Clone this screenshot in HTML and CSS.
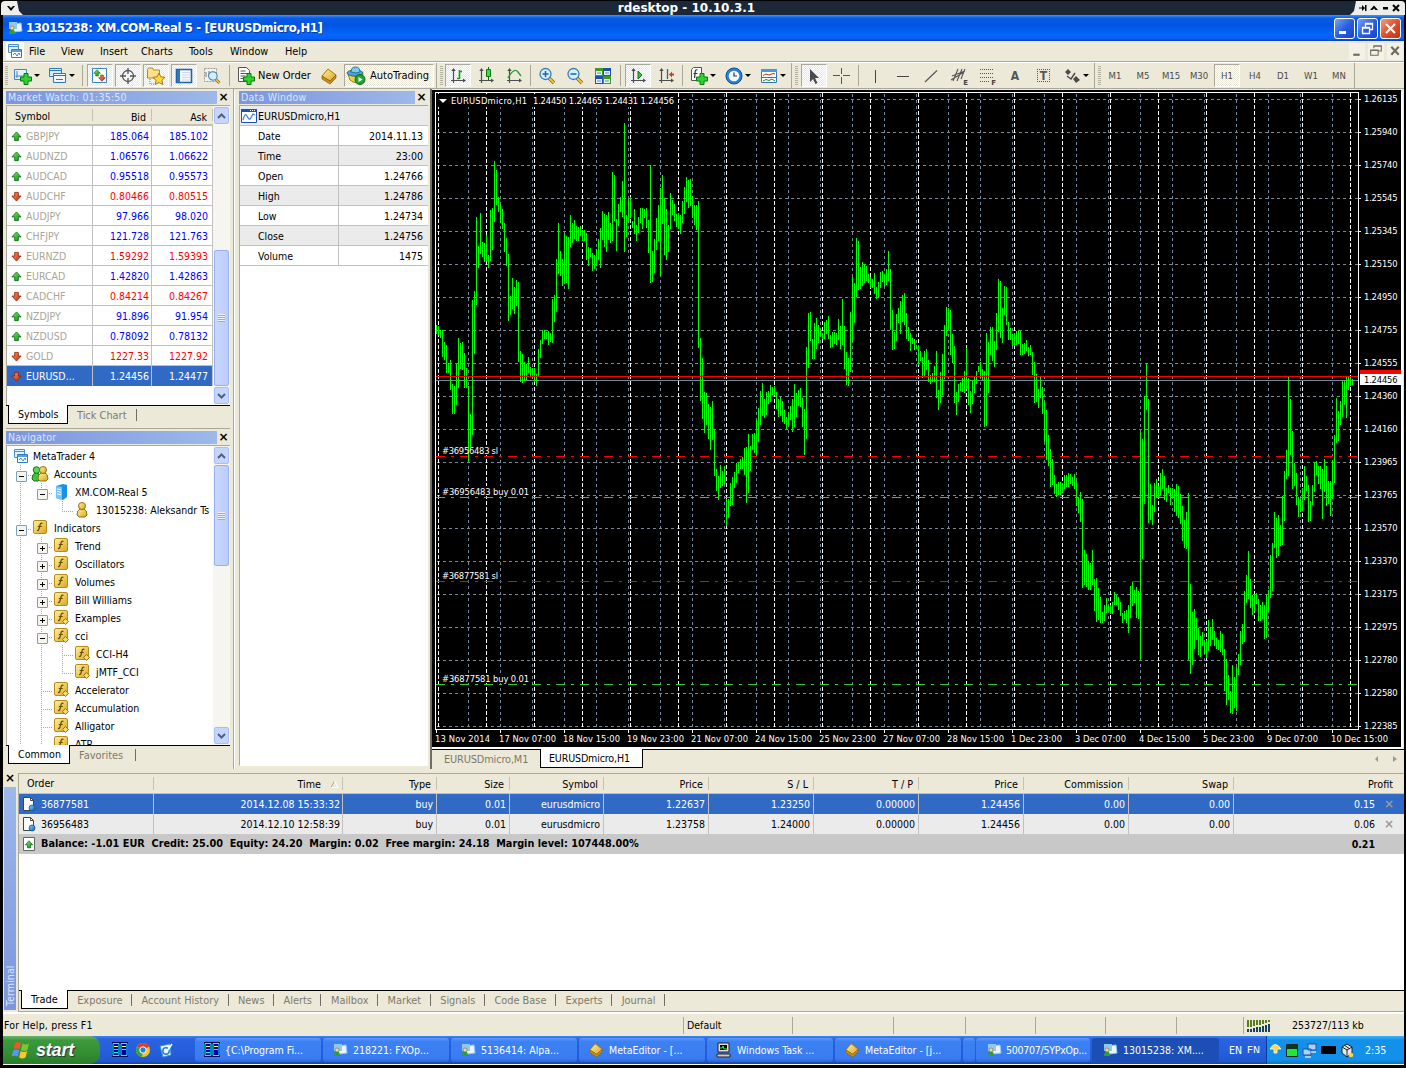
FILE: index.html
```html
<!DOCTYPE html>
<html lang="en">
<head>
<meta charset="utf-8">
<title>rdesktop - 10.10.3.1</title>
<link rel="stylesheet" href="styles.css">
</head>
<body>
<svg class="defs" aria-hidden="true">
  <defs>
    <linearGradient id="gGold" x1="0" y1="0" x2="1" y2="1"><stop offset="0" stop-color="#fff3a0"/><stop offset="1" stop-color="#d9a520"/></linearGradient>
    <linearGradient id="gGreen" x1="0" y1="0" x2="1" y2="1"><stop offset="0" stop-color="#7dee6a"/><stop offset="1" stop-color="#0c8a10"/></linearGradient>
    <linearGradient id="gRed" x1="0" y1="0" x2="1" y2="1"><stop offset="0" stop-color="#ff9a70"/><stop offset="1" stop-color="#b82a08"/></linearGradient>
    <linearGradient id="gBlue" x1="0" y1="0" x2="1" y2="1"><stop offset="0" stop-color="#7fd0ff"/><stop offset="1" stop-color="#0a62c0"/></linearGradient>
    <symbol id="plus" viewBox="0 0 12 12"><path d="M4 .5h4V4h3.500v4H8v3.500H4V8H.5V4H4z" fill="#2fd32f" stroke="#077a0c"/></symbol>
    <symbol id="up" viewBox="0 0 12 12"><path d="M6 1L11 6.500H8V10.500H4V6.500H1z" fill="url(#gGreen)" stroke="#0b6a14" stroke-width=".9"/></symbol>
    <symbol id="down" viewBox="0 0 12 12"><path d="M6 11L11 5.500H8V1.500H4V5.500H1z" fill="url(#gRed)" stroke="#8f2106" stroke-width=".9"/></symbol>
    <symbol id="func" viewBox="0 0 18 18"><rect x="2.500" y="1.500" width="13" height="13" rx="1.500" fill="url(#gGold)" stroke="#b98a1c"/><path d="M11.500 4.500q-2-1-2.500 1.500L8 10q-.4 1.800-2 1.500M6.800 7.500h4" fill="none" stroke="#6b4a00" stroke-width="1.200"/></symbol>
    <symbol id="funcd" viewBox="0 0 18 18"><use href="#func"/><path d="M13.500 9.500l3 3-3 3-3-3z" fill="#f5d76a" stroke="#9c7414"/></symbol>
    <symbol id="windows" viewBox="0 0 18 18"><path d="M2.500 2.500h10v8h-10z" fill="#dff0ff" stroke="#4a90d0" /><path d="M2.500 4.500h10" stroke="#4a90d0"/><path d="M5.500 7.500h10v8h-10z" fill="#fff" stroke="#2c7cc8"/><path d="M5.500 9h10" stroke="#2c7cc8" stroke-width="1.500"/><path d="M7 13l2-2 2 3 2-3 1 2" fill="none" stroke="#2c7cc8" stroke-width=".9"/></symbol>
    <symbol id="user" viewBox="0 0 18 18"><path d="M4 14q0-5 3-6h4q3 1 3 6l-2 2H6z" fill="url(#gGold)" stroke="#94700f"/><circle cx="9" cy="5" r="3.500" fill="url(#gGold)" stroke="#94700f"/></symbol>
    <symbol id="users" viewBox="0 0 18 18"><path d="M1 14q0-5 3-6h3l3 6-3 2H3z" fill="#3ec43e" stroke="#117a17"/><circle cx="5.500" cy="5" r="3.300" fill="#58d850" stroke="#117a17"/><path d="M7 14q0-5 3-6h4q3 1 3 6l-2 2H9z" fill="url(#gGold)" stroke="#94700f"/><circle cx="12" cy="5" r="3.500" fill="url(#gGold)" stroke="#94700f"/></symbol>
    <symbol id="server" viewBox="0 0 18 18"><path d="M4 3l7-2 4 1v12l-4 3-7-2z" fill="#1b8fe0"/><path d="M4 3l6 1v13l-6-2z" fill="#6cc6ff"/><path d="M5 6l4 .7M5 8.500l4 .7M5 11l4 .7" stroke="#fff"/></symbol>
    <symbol id="app" viewBox="0 0 16 16"><path d="M6 4l8-1 1 8-8 1z" fill="#eaf5ff" stroke="#9cc8ee"/><path d="M2 2h8v7H2z" fill="#8fc8f4"/><path d="M2 14q0-4 3-5 3 1 3 5z" fill="#2f9e3a"/><circle cx="5" cy="8" r="2" fill="#f0d8a0" stroke="#7a5a10" stroke-width=".5"/></symbol>
    <symbol id="book" viewBox="0 0 18 18"><path d="M2 9l6-7 8 6-6 6z" fill="url(#gGold)" stroke="#a87412"/><path d="M2 9l8 5 6-6v3l-6 6-8-5z" fill="#c98d1c" stroke="#8a5c08" stroke-width=".7"/></symbol>
    <symbol id="axes" viewBox="0 0 18 18"><path d="M4.500 3v13M2 13.500h13" stroke="#4d4d4d" stroke-width="1.200"/><path d="M4.500 1l2.200 3H2.300zM17 13.500l-3-2v4z" fill="#4d4d4d"/></symbol>
    <symbol id="lens" viewBox="0 0 18 18"><path d="M11 11l5 5" stroke="#8a6410" stroke-width="3.600"/><path d="M11 11l5 5" stroke="#f0c83c" stroke-width="2"/><circle cx="7.500" cy="7" r="5.500" fill="#d4edff" stroke="#3a7eb4" stroke-width="1.300"/></symbol>
    <symbol id="panels" viewBox="0 0 16 16"><path d="M0 0h16v15H0z" fill="#000c50"/><path d="M1 1.500h6v12H1zM9 1.500h6v12H9z" fill="#0000a8" stroke="#0ff"/><path d="M2 4.500h4M10 4.500h4" stroke="#ff3"/><path d="M2 7.500h4M10 7.500h4M2 10.500h4" stroke="#0ff"/></symbol>
    <symbol id="page" viewBox="0 0 14 16"><path d="M1.500 1.500h7l3 3v10h-10z" fill="#fff" stroke="#444"/><path d="M8.500 1.500v3h3" fill="none" stroke="#444"/></symbol>
  </defs>
</svg>

<div class="frame">
  <header class="vm-bar">
    <span class="vm-corner vm-left"><svg width="10" height="7" viewBox="0 0 10 7"><path d="M1 1l4 5 4-5-2 0-2 2-2-2z"/></svg></span>
    <span class="vm-title">rdesktop - 10.10.3.1</span>
    <span class="vm-corner vm-right">
      <svg width="44" height="8" viewBox="0 0 44 8" fill="#000"><path d="M0 3.500h5v1H0zM3 1l3 3-3 3zM6 1h1.500v6H6zM11 6l4-4.500L19 6h-2.500L15 4.500 13.500 6zM24 3h5v2.500h-5z"/><path d="M34 1l6 6M40 1l-6 6" stroke="#000" stroke-width="2"/></svg>
    </span>
  </header>

  <div class="title-bar">
    <svg class="i16"><use href="#app"/></svg>
    <h1>13015238: XM.COM-Real 5 - [EURUSDmicro,H1]</h1>
    <div class="win-btns">
      <span class="win-btn"><svg viewBox="0 0 19 19"><path d="M4 12h7v3H4z" fill="#fff"/></svg></span>
      <span class="win-btn"><svg viewBox="0 0 19 19"><path d="M7.500 8V4.500h7v6H12M7 5h8M4.500 8.500h7v6h-7zM4 9h8" fill="none" stroke="#fff" stroke-width="1.300"/></svg></span>
      <span class="win-btn close"><svg viewBox="0 0 19 19"><path d="M5 5l9 9M14 5l-9 9" stroke="#fff" stroke-width="2.200"/></svg></span>
    </div>
  </div>

  <nav class="menu-bar">
    <svg class="menu-icon"><use href="#windows"/></svg>
    <span class="m-file">File</span><span class="m-view">View</span><span class="m-insert">Insert</span><span class="m-charts">Charts</span><span class="m-tools">Tools</span><span class="m-window">Window</span><span class="m-help">Help</span>
    <div class="mdi-btns">
      <span><svg viewBox="0 0 15 15"><path d="M4 10h6v2H4z" fill="#6d6a60"/></svg></span>
      <span><svg viewBox="0 0 15 15"><path d="M5.500 5V2.500h7v5H10M5 3h8M2.500 6.500h7v5h-7zM2 7h8" fill="none" stroke="#6d6a60"/></svg></span>
      <span><svg viewBox="0 0 15 15"><path d="M4 3.500l7 7.500M11 3.500L4 11" stroke="#6d6a60" stroke-width="2"/></svg></span>
    </div>
  </nav>

  <div class="toolbar">
    <i class="grip first"></i>
    <span class="tb drop"><svg viewBox="0 0 20 20"><path d="M1.500 3.500h12v10h-12z" fill="#e6f3ff" stroke="#3c86c4"/><path d="M4 5v7M2.500 10h9" stroke="#3c86c4"/><svg x="7" y="7" width="12" height="12"><use href="#plus"/></svg></svg><b></b></span>
    <span class="tb drop"><svg viewBox="0 0 20 20"><path d="M1.500 2.500h12v8h-12z" fill="#d8ecff" stroke="#2f78ba"/><path d="M1.500 4.500h12" stroke="#2f78ba"/><path d="M5.500 7.500h12v9h-12z" fill="#eef7ff" stroke="#2f78ba"/><path d="M5.500 9.500h12M8 13.500h7" stroke="#2f78ba"/></svg><b></b></span>
    <i class="sep s7"></i>
    <span class="tb on"><svg viewBox="0 0 20 20"><path d="M2.500 2.500h14v14h-14z" fill="#fff" stroke="#3c86c4"/><svg x="3" y="3" width="8" height="8"><use href="#up"/></svg><svg x="8" y="8" width="8" height="8"><use href="#down"/></svg></svg></span>
    <span class="tb on"><svg viewBox="0 0 20 20"><circle cx="10" cy="10" r="5.500" fill="none" stroke="#555" stroke-width="1.300"/><path d="M10 2v6M10 12v6M2 10h6M12 10h6" stroke="#555" stroke-width="1.300"/></svg></span>
    <span class="tb on"><svg viewBox="0 0 20 20"><path d="M1.500 3.500l1-1.500h4l1 2h6v8h-12z" fill="#fbe28a" stroke="#b88a1c"/><path d="M4 13v5h4" stroke="#777" stroke-dasharray="1 1" fill="none"/><path d="M13 7l1.800 3.800 4.200.5-3 3 .8 4.200-3.800-2-3.800 2 .8-4.200-3-3 4.200-.5z" fill="#ffd83a" stroke="#a87810"/></svg></span>
    <span class="tb on"><svg viewBox="0 0 20 20"><path d="M2.500 3.500h15v13h-15z" fill="#f5faff" stroke="#1c62aa" stroke-width="1.600"/><path d="M3 4h3v12H3z" fill="#2a78c8"/><path d="M8 6.500h8M8 9h8M8 11.500h8M8 14h8" stroke="#c4d8ea"/></svg></span>
    <span class="tb"><svg viewBox="0 0 20 20"><path d="M2.500 2.500h12v13h-12z" fill="#f2f2f0" stroke="#999" stroke-dasharray="2 1"/><path d="M4 11V6M7 9V5M10 12V7" stroke="#777"/><svg x="5" y="4" width="14" height="15"><use href="#lens"/></svg></svg></span>
    <i class="sep s6"></i>
    <span class="tb wide new-order"><svg viewBox="0 0 20 20"><path d="M2.500 1.500h8l3 3v11h-11z" fill="#fff" stroke="#555"/><path d="M4.500 5h5M4.500 7.500h7M4.500 10h5M4.500 12.500h3" stroke="#555"/><svg x="7" y="7" width="12" height="12"><use href="#plus"/></svg></svg>New Order</span>
    <span class="tb"><svg viewBox="-1 -1 20 20"><use href="#book" width="18" height="18"/></svg></span>
    <span class="tb wide on auto"><svg viewBox="0 0 20 20"><path d="M2 8q8 5 15 0l-1 7q-6 4-12-1z" fill="#f3cf48" stroke="#a87c18"/><ellipse cx="9" cy="7" rx="8" ry="3" fill="#4aa4dc" stroke="#24729e"/><path d="M5 6q0-5 4.500-5T14 6q-4 2-9 0z" fill="#7fc8ee" stroke="#24729e"/><circle cx="14" cy="13.500" r="5" fill="#22a52c" stroke="#0b6e12"/><path d="M12.500 11l4 2.500-4 2.500z" fill="#fff"/></svg>AutoTrading</span>

    <i class="edge e9"></i>
    <span class="tb on"><svg viewBox="0 0 20 20"><use href="#axes" x="1" y="1" width="18" height="18"/><path d="M11.500 4v9M9 12.500h2.500M11.500 5.500H14" stroke="#119a1c" stroke-width="1.600"/></svg></span>
    <span class="tb"><svg viewBox="0 0 20 20"><use href="#axes" x="1" y="1" width="18" height="18"/><path d="M12.500 1v13" stroke="#0b6a14"/><path d="M10.500 3.500h4v7h-4z" fill="#3fd84a" stroke="#0b7a14"/></svg></span>
    <span class="tb"><svg viewBox="0 0 20 20"><use href="#axes" x="1" y="1" width="18" height="18"/><path d="M4 12q6-11 10-6l3 4" fill="none" stroke="#2a9a36" stroke-width="1.300"/></svg></span>
    <i class="sep s5"></i>
    <span class="tb"><svg viewBox="0 0 20 20"><use href="#lens" x="1" y="1" width="18" height="18"/><path d="M5.500 8h6M8.500 5v6" stroke="#1b66a8" stroke-width="1.500"/></svg></span>
    <span class="tb"><svg viewBox="0 0 20 20"><use href="#lens" x="1" y="1" width="18" height="18"/><path d="M5.500 8h6" stroke="#1b66a8" stroke-width="1.500"/></svg></span>
    <span class="tb"><svg viewBox="0 0 20 20"><path d="M2 2h8v8H2zM10 10h8v8h-8z" fill="#3c9a20"/><path d="M10 2h8v8h-8zM2 10h8v8H2z" fill="#1b50b8"/><path d="M3 5h6v4H3zM11 5h6v4h-6zM3 13h6v4H3zM11 13h6v4h-6z" fill="#eaf4ff"/><path d="M4 7h4M12 7h4M4 15h4M12 15h4" stroke="#5a8a9a"/></svg></span>
    <i class="sep s7"></i>
    <span class="tb on"><svg viewBox="0 0 20 20"><use href="#axes" x="1" y="1" width="18" height="18"/><path d="M10 5l4 4-4 4z" fill="#33c23c" stroke="#0b7a14"/></svg></span>
    <span class="tb"><svg viewBox="0 0 20 20"><use href="#axes" x="1" y="1" width="18" height="18"/><path d="M11.500 3v10" stroke="#1b66a8" stroke-width="1.300"/><path d="M13 8.500l3-3v2h2v2h-2v2z" fill="#c0431c"/></svg></span>
    <i class="sep s5"></i>
    <span class="tb drop"><svg viewBox="0 0 20 20"><path d="M2.500 3.500l2-2h8v13h-10z" fill="#fff" stroke="#555"/><path d="M8.500 4q-2-.6-2.300 1.500L5.600 12M4.500 7.500h4" fill="none" stroke="#333" stroke-width="1.200"/><svg x="7" y="7" width="12" height="12"><use href="#plus"/></svg></svg><b></b></span>
    <span class="tb drop"><svg viewBox="0 0 20 20"><circle cx="10" cy="10" r="8" fill="#2a80d4" stroke="#0f4c90"/><circle cx="10" cy="10" r="5.300" fill="#f2f8ff"/><path d="M10 6.500V10h3" fill="none" stroke="#333" stroke-width="1.200"/></svg><b></b></span>
    <span class="tb drop"><svg viewBox="0 0 20 20"><path d="M2.500 3.500h15v13h-15z" fill="#fff" stroke="#2f78ba"/><path d="M2 3h16v3H2z" fill="#4a98dc"/><path d="M4 9.500l3-1.500 3 1 4-1.500 2 .5" fill="none" stroke="#b4381c"/><path d="M3 11.500h14" stroke="#2f78ba"/><path d="M4 15l3-1.500 3 1 3-1.500 3 2" fill="none" stroke="#1d8a28"/></svg><b></b></span>

    <i class="edge e10"></i>
    <span class="tb on"><svg viewBox="0 0 20 20"><path d="M6 3v13l3-3 2.500 5 2-1-2.500-5h4z" fill="#4a4a4a"/></svg></span>
    <span class="tb"><svg viewBox="0 0 20 20"><path d="M9.500 2v6M9.500 11v7M1 9.500h7M11 9.500h7" stroke="#555"/></svg></span>
    <i class="sep s5"></i>
    <span class="tb"><svg viewBox="0 0 20 20"><path d="M10.500 4v13" stroke="#444"/></svg></span>
    <span class="tb"><svg viewBox="0 0 20 20"><path d="M4 10.500h12" stroke="#444"/></svg></span>
    <span class="tb"><svg viewBox="0 0 20 20"><path d="M4 16L16 4.500" stroke="#555" stroke-width="1.200"/></svg></span>
    <span class="tb"><svg viewBox="0 0 20 20"><path d="M4 15L9 3M8 15l5-12M12 13l4-10M2 14L15 6M3 10l13-5" stroke="#555" stroke-width="1.100"/></svg><em>E</em></span>
    <span class="tb"><svg viewBox="0 0 20 20"><path d="M3 3.500h14M3 7.500h14M3 11.500h14M3 15.500h9" stroke="#555" stroke-dasharray="1 1"/></svg><em>F</em></span>
    <span class="tb glyph">A</span>
    <span class="tb glyph boxed"><span>T</span></span>
    <span class="tb drop tool"><svg viewBox="0 0 20 20"><path d="M3 6l3-3 3 3-3 3zM11 13l3-3 4 4-4 3z" fill="#4a4a4a"/><path d="M5 10l4 3 4-6" fill="none" stroke="#4a4a4a" stroke-width="1.500"/></svg><b></b></span>

    <i class="edge e7"></i>
    <span class="tb tf">M1</span><span class="tb tf">M5</span><span class="tb tf">M15</span><span class="tb tf">M30</span><span class="tb tf on">H1</span><span class="tb tf">H4</span><span class="tb tf">D1</span><span class="tb tf">W1</span><span class="tb tf">MN</span>
    <i class="edge last"></i>
  </div>

  <main class="work">
    <div class="left-col">
      <section class="dock market">
        <h2 class="dock-title">Market Watch: 01:35:50</h2><span class="x">×</span>
        <div class="dock-body">
          <div class="mw">
            <div class="mw-row head"><span>Symbol</span><span>Bid</span><span>Ask</span></div>
            <div class="mw-row up"><span><svg><use href="#up"/></svg>GBPJPY</span><span>185.064</span><span>185.102</span></div>
            <div class="mw-row up"><span><svg><use href="#up"/></svg>AUDNZD</span><span>1.06576</span><span>1.06622</span></div>
            <div class="mw-row up"><span><svg><use href="#up"/></svg>AUDCAD</span><span>0.95518</span><span>0.95573</span></div>
            <div class="mw-row down"><span><svg><use href="#down"/></svg>AUDCHF</span><span>0.80466</span><span>0.80515</span></div>
            <div class="mw-row up"><span><svg><use href="#up"/></svg>AUDJPY</span><span>97.966</span><span>98.020</span></div>
            <div class="mw-row up"><span><svg><use href="#up"/></svg>CHFJPY</span><span>121.728</span><span>121.763</span></div>
            <div class="mw-row down"><span><svg><use href="#down"/></svg>EURNZD</span><span>1.59292</span><span>1.59393</span></div>
            <div class="mw-row up"><span><svg><use href="#up"/></svg>EURCAD</span><span>1.42820</span><span>1.42863</span></div>
            <div class="mw-row down"><span><svg><use href="#down"/></svg>CADCHF</span><span>0.84214</span><span>0.84267</span></div>
            <div class="mw-row up"><span><svg><use href="#up"/></svg>NZDJPY</span><span>91.896</span><span>91.954</span></div>
            <div class="mw-row up"><span><svg><use href="#up"/></svg>NZDUSD</span><span>0.78092</span><span>0.78132</span></div>
            <div class="mw-row down"><span><svg><use href="#down"/></svg>GOLD</span><span>1227.33</span><span>1227.92</span></div>
            <div class="mw-row down sel"><span><svg><use href="#down"/></svg>EURUSD...</span><span>1.24456</span><span>1.24477</span></div>
          </div>
          <div class="scroll">
            <span class="sb"><svg viewBox="0 0 9 6"><path d="M1 5l3.500-3.500L8 5"/></svg></span>
            <span class="track"></span><span class="thumb t-market"></span>
            <span class="sb"><svg viewBox="0 0 9 6"><path d="M1 1l3.500 3.500L8 1"/></svg></span>
          </div>
        </div>
        <div class="tabs"><span class="tab active">Symbols</span><span class="tab">Tick Chart</span></div>
      </section>

      <section class="dock nav">
        <h2 class="dock-title">Navigator</h2><span class="x">×</span>
        <div class="dock-body">
          <div class="tree">
            <div class="node root"><svg><use href="#windows"/></svg>MetaTrader 4</div>
            <div class="node"><i class="t box minus"></i><svg><use href="#users"/></svg>Accounts</div>
            <div class="node"><i class="g"></i><i class="l box minus"></i><svg><use href="#server"/></svg>XM.COM-Real 5</div>
            <div class="node"><i class="g"></i><i></i><i class="l"></i><svg><use href="#user"/></svg>13015238: Aleksandr Ts</div>
            <div class="node"><i class="t box minus"></i><svg><use href="#func"/></svg>Indicators</div>
            <div class="node"><i class="g"></i><i class="t box"></i><svg><use href="#func"/></svg>Trend</div>
            <div class="node"><i class="g"></i><i class="t box"></i><svg><use href="#func"/></svg>Oscillators</div>
            <div class="node"><i class="g"></i><i class="t box"></i><svg><use href="#func"/></svg>Volumes</div>
            <div class="node"><i class="g"></i><i class="t box"></i><svg><use href="#func"/></svg>Bill Williams</div>
            <div class="node"><i class="g"></i><i class="t box"></i><svg><use href="#funcd"/></svg>Examples</div>
            <div class="node"><i class="g"></i><i class="t box minus"></i><svg><use href="#funcd"/></svg>cci</div>
            <div class="node"><i class="g"></i><i class="g"></i><i class="t"></i><svg><use href="#funcd"/></svg>CCI-H4</div>
            <div class="node"><i class="g"></i><i class="g"></i><i class="l"></i><svg><use href="#funcd"/></svg>jMTF_CCI</div>
            <div class="node"><i class="g"></i><i class="t"></i><svg><use href="#funcd"/></svg>Accelerator</div>
            <div class="node"><i class="g"></i><i class="t"></i><svg><use href="#funcd"/></svg>Accumulation</div>
            <div class="node"><i class="g"></i><i class="t"></i><svg><use href="#funcd"/></svg>Alligator</div>
            <div class="node"><i class="g"></i><i class="t"></i><svg><use href="#funcd"/></svg>ATR</div>
          </div>
          <div class="scroll">
            <span class="sb"><svg viewBox="0 0 9 6"><path d="M1 5l3.500-3.500L8 5"/></svg></span>
            <span class="thumb t-nav"></span><span class="track"></span>
            <span class="sb"><svg viewBox="0 0 9 6"><path d="M1 1l3.500 3.500L8 1"/></svg></span>
          </div>
        </div>
        <div class="tabs"><span class="tab active">Common</span><span class="tab">Favorites</span></div>
      </section>
    </div>

    <section class="dock data">
      <h2 class="dock-title">Data Window</h2><span class="x">×</span>
      <div class="dw">
        <div class="dw-head"><svg width="16" height="14" viewBox="0 0 16 14"><path d="M.5.500h15v13H.5z" fill="#fff" stroke="#1b50b8"/><path d="M0 0h16v3H0z" fill="#1b50b8"/><path d="M9 1.500h1M11 1.500h1M13 1.500h1" stroke="#fff"/><path d="M2 11q2-8 4-4t3 3 3-5l2 1" fill="none" stroke="#3a82d8" stroke-width="1.200"/></svg>EURUSDmicro,H1</div>
        <div class="dw-row"><span>Date</span><span>2014.11.13</span></div>
        <div class="dw-row"><span>Time</span><span>23:00</span></div>
        <div class="dw-row"><span>Open</span><span>1.24766</span></div>
        <div class="dw-row"><span>High</span><span>1.24786</span></div>
        <div class="dw-row"><span>Low</span><span>1.24734</span></div>
        <div class="dw-row"><span>Close</span><span>1.24756</span></div>
        <div class="dw-row"><span>Volume</span><span>1475</span></div>
      </div>
    </section>

    <section class="charts">
      <svg id="chart" class="chart" width="969" height="657" viewBox="432 90 969 657"></svg>
      <div class="tabs chart-tabs"><span class="tab">EURUSDmicro,M1</span><span class="tab active">EURUSDmicro,H1</span>
        <span class="tab-arrows"><svg width="24" height="8" viewBox="0 0 24 8" fill="#9a9a94"><path d="M4 1v6L1 4zM19 1v6l4-3z"/></svg></span></div>
    </section>
  </main>

  <section class="terminal">
    <div class="side"><span class="x">×</span><span class="side-title">Terminal</span></div>
    <div class="term-main">
      <div class="tr th"><span>Order</span><span>Time<svg width="9" height="8" viewBox="0 0 9 8"><path d="M1 7.500L4.500 1" stroke="#aca899"/><path d="M4.500 1L8 7.500H1" fill="none" stroke="#fff"/></svg></span><span>Type</span><span>Size</span><span>Symbol</span><span>Price</span><span>S / L</span><span>T / P</span><span>Price</span><span>Commission</span><span>Swap</span><span>Profit</span></div>
      <div class="tr sel"><span><svg viewBox="0 0 14 16"><use href="#page"/><circle cx="10" cy="12" r="3" fill="url(#gBlue)" stroke="#0a4c90" stroke-width=".7"/></svg>36877581</span><span>2014.12.08 15:33:32</span><span>buy</span><span>0.01</span><span>eurusdmicro</span><span>1.22637</span><span>1.23250</span><span>0.00000</span><span>1.24456</span><span>0.00</span><span>0.00</span><span>0.15<u>×</u></span></div>
      <div class="tr alt"><span><svg viewBox="0 0 14 16"><use href="#page"/><circle cx="10" cy="12" r="3" fill="url(#gBlue)" stroke="#0a4c90" stroke-width=".7"/></svg>36956483</span><span>2014.12.10 12:58:39</span><span>buy</span><span>0.01</span><span>eurusdmicro</span><span>1.23758</span><span>1.24000</span><span>0.00000</span><span>1.24456</span><span>0.00</span><span>0.00</span><span>0.06<u>×</u></span></div>
      <div class="balance"><svg viewBox="0 0 14 16"><path d="M1.500 1.500h11v13h-11z" fill="#fff" stroke="#666"/><svg x="2.500" y="4" width="9" height="9"><use href="#up"/></svg></svg><span>Balance: -1.01 EUR&nbsp; Credit: 25.00&nbsp; Equity: 24.20&nbsp; Margin: 0.02&nbsp; Free margin: 24.18&nbsp; Margin level: 107448.00%</span><strong>0.21</strong></div>
      <div class="blank"></div>
      <div class="tabs"><span class="tab active">Trade</span><span class="tab">Exposure</span><span class="tab">Account History</span><span class="tab">News</span><span class="tab">Alerts</span><span class="tab">Mailbox</span><span class="tab">Market</span><span class="tab">Signals</span><span class="tab">Code Base</span><span class="tab">Experts</span><span class="tab">Journal</span></div>
    </div>
  </section>

  <footer class="status"><span>For Help, press F1</span><span>Default</span><span></span><span></span><span></span><span></span><span></span><span></span><span class="conn"><svg width="24" height="12" viewBox="0 0 24 12"><path d="M1 0v7M4 0v7M7 0v6M10 0v5M13 0v5M16 0v4M19 0v3M22 0v2" stroke="#5b7a1c" stroke-width="2"/><path d="M1 9v3M4 9v3M7 8v4M10 7v5M13 7v5M16 6v6M19 5v7M22 4v8" stroke="#17435e" stroke-width="2"/></svg>253727/113 kb</span></footer>

  <div class="taskbar">
    <span class="start"><svg width="20" height="18" viewBox="0 0 20 18"><path d="M3 2q3-2 6 0l-1.500 6q-3-1.500-6 0z" fill="#f0562a"/><path d="M10.500 2.500q3 2 6.500 0L15.500 9q-3 2-6.500 0z" fill="#7cc534"/><path d="M1.200 9.500q3-2 6 0L5.700 15.500q-3-1.500-6 0z" fill="#5a94f4"/><path d="M8.700 10q3 2 6.500 0l-1.700 6.500q-3 2-6.300 0z" fill="#fdc822"/></svg>start</span>
    <span class="quick">
      <svg width="16" height="16"><use href="#panels"/></svg>
      <svg width="16" height="16" viewBox="0 0 16 16"><circle cx="8" cy="8" r="7" fill="#f4c61c"/><path d="M8 8L1.900 4.500A7 7 0 0 1 14.100 4.500z" fill="#df3b2c"/><path d="M8 8L7 15A7 7 0 0 1 1.900 4.500z" fill="#33a34c"/><circle cx="8" cy="8" r="3.200" fill="#2c7be0" stroke="#fff"/></svg>
      <svg width="16" height="16" viewBox="0 0 16 16"><path d="M2 4l10-2 1 11-8 2z" fill="#e8f4ff" stroke="#3a92d8"/><circle cx="8" cy="9" r="3.200" fill="none" stroke="#2a84cc" stroke-width="1.500"/><path d="M9 9l5-7" stroke="#fff" stroke-width="1.500"/></svg>
    </span>
    <span class="task"><svg><use href="#panels"/></svg>{C:\Program Fi...</span>
    <span class="task"><svg><use href="#app"/></svg>218221: FXOp...</span>
    <span class="task"><svg><use href="#app"/></svg>5136414: Alpa...</span>
    <span class="task"><svg><use href="#book"/></svg>MetaEditor - [...</span>
    <span class="task"><svg viewBox="0 0 16 16"><path d="M2 1h11v9H2z" fill="#ddd" stroke="#222"/><path d="M4 3h7v5H4z" fill="#001"/><path d="M4 6h2l1-2 1 3h3" fill="none" stroke="#3f3"/><path d="M1 12h13v3H1z" fill="#ccc" stroke="#222"/></svg>Windows Task ...</span>
    <span class="task"><svg><use href="#book"/></svg>MetaEditor - [j...</span>
    <span class="task stub"></span>
    <span class="task cut"><svg><use href="#app"/></svg>500707/5YPxOp...</span>
    <span class="task current"><svg><use href="#app"/></svg>13015238: XM....</span>
    <span class="lang">EN</span><span class="lang second">EN</span>
    <span class="tray">
      <svg width="13" height="14" viewBox="0 0 13 14"><path d="M1 6q5-9 11 0H8v4H5V6z" fill="#f8d83c" stroke="#fff" stroke-width=".8"/></svg>
      <svg width="12" height="13" viewBox="0 0 12 13"><path d="M.5.500h11v12H.5z" fill="#0d3a10" stroke="#222"/><path d="M1 5h10v7H1z" fill="#1fe83a"/></svg>
      <svg width="15" height="15" viewBox="0 0 15 15"><path d="M6 1h8v6H6zM1 6h8v6H1z" fill="#a6d4ff" stroke="#234c9c"/><path d="M3 14h6M9 9h5" stroke="#ddd" stroke-width="1.500"/></svg>
      <svg width="15" height="8" viewBox="0 0 15 8"><path d="M0 0h15v8H0z"/></svg>
      <svg width="14" height="15" viewBox="0 0 14 15"><path d="M7 1l5 3v6l-5 4-5-4V4z" fill="#e8e8e8" stroke="#222"/><path d="M2 4l5 3 5-3M7 7v7M4 2l6 4" fill="none" stroke="#222"/><circle cx="11" cy="12" r="2.300" fill="#f8d83c"/></svg>
      <span class="clock">2:35</span>
    </span>
  </div>
</div>
<script src="chart.js"></script>
</body>
</html>
```
FILE: styles.css
```css
* { box-sizing: border-box; }
html, body { margin: 0; }
body {
  width: 1406px; height: 1068px; overflow: hidden; background: #000; color: #000;
  font: 10.5px/14px "DejaVu Sans Condensed", "DejaVu Sans", "Noto Sans", sans-serif;
  font-stretch: condensed;
  white-space: nowrap;
}
h1, h2 { margin: 0; font: inherit; }
i, em { font-style: normal; }
svg { flex: none; display: block; }
.defs { position: absolute; width: 0; height: 0; }

.frame { width: 1406px; height: 1068px; padding: 1px 2px 3px 3px; display: flex; flex-direction: column; overflow: hidden; }

/* remote desktop strip */
.vm-bar { height: 14px; margin: 0 -1px 0 -2px; background: #1c2838; display: flex; justify-content: space-between; align-items: center; border-radius: 4px 4px 0 0; overflow: hidden; }
.vm-corner { height: 14px; background: #ededeb; display: flex; align-items: center; }
.vm-left { width: 22px; padding-left: 5px; clip-path: polygon(0 0, 16px 0, 18px 10px, 100% 100%, 0 100%); }
.vm-right { width: 55px; padding-left: 9px; clip-path: polygon(6px 0, 100% 0, 100% 100%, 0 100%, 4px 10px); }
.vm-title { color: #fff; font: bold 12px/14px "DejaVu Sans", sans-serif; font-stretch: normal; }

.title-bar { height: 26px; display: flex; align-items: center; padding: 0 3px 0 4px; background: linear-gradient(#3d95ff 0, #0a5be4 12%, #0054e3 40%, #0466fd 75%, #0462f5 90%, #003fc0); }
.i16 { width: 16px; height: 16px; margin-right: 3px; }
.title-bar h1 { color: #fff; font: bold 13px/24px "DejaVu Sans Condensed", sans-serif; font-stretch: condensed; letter-spacing: -.37px; text-shadow: 1px 1px 0 #0a3a9c; flex: 1; }
.win-btns { display: flex; gap: 2px; }
.win-btn { width: 21px; height: 21px; border: 1px solid #fff; border-radius: 3px; background: linear-gradient(135deg, #7ba2f0, #2a5fe0 50%, #1746c8); }
.win-btn.close { background: linear-gradient(135deg, #f0a088, #e0502c 50%, #c0340f); }

.menu-bar { height: 21px; flex: none; background: #ece9d8; border-bottom: 1px solid #aca899; display: flex; align-items: center; line-height: 18px; }
.menu-icon { width: 18px; height: 18px; margin: 0 0 0 3px; background: #fff; }
.menu-bar > span { flex: none; font-size: 10.800px; padding-top: 1px; }
.m-file { width: 32px; margin-left: 5px; } .m-view { width: 39px; } .m-insert { width: 41px; } .m-charts { width: 48px; } .m-tools { width: 41px; } .m-window { width: 55px; } .m-help { width: 40px; }
.mdi-btns { margin-left: auto; display: flex; gap: 3px; padding-right: 1px; }
.mdi-btns span { width: 16px; height: 17px; background: #f4f2e8; }

/* toolbar */
.toolbar { height: 27px; flex: none; background: #ece9d8; border-top: 1px solid #fff; border-bottom: 1px solid #aca899; display: flex; align-items: center; }
.tb { width: 26px; height: 23px; margin: 0 1px; flex: none; display: flex; align-items: center; justify-content: center; position: relative; }
.tb > svg { width: 20px; height: 20px; }
.tb.on { border: 1px solid #aca899; border-right-color: #fff; border-bottom-color: #fff; background: repeating-conic-gradient(#fff 0 25%, #ece9d8 0 50%) 0 0 / 2px 2px; }
.tb.drop { width: 33px; justify-content: flex-start; padding-left: 3px; }
.tb.drop b { border: 3px solid transparent; border-top-color: #000; border-bottom: 0; margin-left: 1px; }
.tb.wide { font-size: 11px; justify-content: flex-start; gap: 2px; }
.new-order { width: 81px; padding-left: 3px; }
.tb.auto { width: 90px; padding-left: 1px; gap: 4px; }
.grip, .edge { flex: none; height: 20px; }
.grip.first { width: 6px; background: repeating-linear-gradient(#b4b0a0 0 1px, transparent 1px 2px) 2px 0 / 3px 19px no-repeat; }
.edge { border-left: 1px solid #aca899; margin-left: 1px; height: 25px; background: repeating-linear-gradient(#b4b0a0 0 1px, transparent 1px 2px) 3px 3px / 3px 19px no-repeat; }
.e9 { width: 8px; } .e10 { width: 9px; } .e7 { width: 7px; }
.edge.last { background: none; }
.sep { flex: none; height: 21px; background: linear-gradient(#aca899, #aca899) center / 1px 100% no-repeat; }
.s5 { width: 5px; } .s6 { width: 6px; } .s7 { width: 7px; }
.tb em { position: absolute; right: 4px; bottom: 0; font: bold 7px/8px "DejaVu Sans", sans-serif; color: #444; background: #ece9d8; }
.glyph { font: bold 12px "DejaVu Sans Condensed", sans-serif; color: #555; width: 26px; }
.boxed { width: 27px; } .boxed span { width: 13px; height: 13px; border: 1px dotted #555; line-height: 12px; text-align: center; }
.tb.tf { color: #4b4b4b; font-size: 9.500px; padding-top: 1px; }

/* docked panels */
.work { height: 680px; flex: none; display: flex; background: #ece9d8; }
.left-col { width: 231px; flex: none; border-right: 1px solid #aca899; padding-top: 2px; }
.dock { display: grid; grid-template-columns: 1fr 13px; align-content: start; }
.dock-title { height: 13px; line-height: 13px; padding-left: 2px; color: #dbe6fb; background: linear-gradient(90deg, #7c95dd, #9db8ea); letter-spacing: .25px; font-size: 10.500px; }
.x { font: bold 12px/13px "DejaVu Sans", sans-serif; text-align: center; }
.market { height: 337px; margin: 0 3px 0 3px; width: 224px; }
.nav { height: 340px; margin: 0 3px; width: 224px; border-top: 1px solid #aca899; padding-top: 2px; }
.dock-body { grid-column: 1 / -1; display: flex; border: 1px solid #aca899; border-width: 1px 0 0 1px; background: #fff; margin-top: 1px; overflow: hidden; }
.market .dock-body { height: 300px; }
.nav .dock-body { height: 300px; }
.mw { flex: 1; }
.mw-row { display: grid; grid-template-columns: 86px 59px 61px; height: 20px; line-height: 20px; border-bottom: 1px solid #c0c0c0; }
.mw-row span { text-align: right; padding-right: 2px; border-right: 1px solid #c0c0c0; display: block; height: 20px; }
.mw-row span:last-child { padding-right: 4px; }
.mw-row span:first-child { display: flex; align-items: center; gap: 4px; color: #a9a595; padding-left: 4px; }
.mw-row svg { width: 11px; height: 11px; }
.mw-row.up { color: #0000ff; } .mw-row.down { color: #ff0000; }
.mw-row.sel, .mw-row.sel span:first-child { background: #316ac5; color: #fff; }
.mw-row.sel { border-bottom-color: #316ac5; }
.mw-row.head { background: #ece9d8; border-bottom: 2px solid #c5c1af; }
.mw-row.head span, .mw-row.head span:first-child { color: #000; padding: 1px 6px 0 8px; border: 0; background: linear-gradient(#c5c1af, #c5c1af) right 3px / 1px 12px no-repeat; height: 18px; }
.scroll { width: 17px; background: #f6f5f0; display: flex; flex-direction: column; padding: 0 1px; }
.sb { height: 17px; flex: none; margin: 1px 0; border: 1px solid #a9bdf0; border-radius: 2px; background: #c6d5fc; display: grid; place-items: center; }
.sb svg { width: 9px; height: 6px; fill: none; stroke: #4d6185; stroke-width: 2; }
.track { flex: 1; }
.thumb { flex: none; border: 1px solid #98b0ec; border-radius: 2px; background: linear-gradient(90deg, #c8d7fd, #bccdfa); display: grid; place-items: center; }
.thumb::after { content: ""; width: 7px; height: 8px; background: repeating-linear-gradient(#eef3ff 0 1px, #8fa9ea 1px 2px); }
.t-market { height: 136px; } .t-nav { height: 101px; }

.tabs { grid-column: 1 / -1; display: flex; border-top: 1px solid #000; height: 20px; padding-left: 2px; background: #ece9d8; color: #7d7a6c; line-height: 19px; font-size: 10.900px; }
.tab { flex: none; position: relative; height: 18px; padding: 0 9px; }
.tab:not(.active)::after { content: ""; position: absolute; right: 0; top: 3px; height: 12px; width: 1px; background: #6f6c60; }
.tab.active { background: #fff; color: #000; border: 1px solid #000; border-top: 0; margin-top: -1px; height: 19px; line-height: 19px; font-size: 10.600px; }
.market .tab { width: 69px; } .market .active { width: 60px; padding: 0 9px; }
.nav .tab { width: 66px; } .nav .active { width: 62px; padding: 0 9px; }

/* navigator tree */
.tree { flex: 1; min-width: 0; overflow: hidden; padding: 1px 0 0 3px; }
.node { height: 18px; display: flex; align-items: center; line-height: 18px; font-size: 10.500px; }
.node > svg { width: 18px; height: 18px; margin-right: 5px; }
.root > svg { width: 18px; margin: 0 3px 0 2px; }
.node i { width: 21px; height: 18px; flex: none; position: relative; --v: repeating-linear-gradient(#aca899 0 1px, transparent 1px 2px); --h: repeating-linear-gradient(90deg, #aca899 0 1px, transparent 1px 2px); }
.node .g { background: var(--v) 10px 0 / 1px 18px no-repeat; }
.node .t { background: var(--v) 10px 0 / 1px 18px no-repeat, var(--h) 10px 10px / 11px 1px no-repeat; }
.node .l { background: var(--v) 10px 0 / 1px 10px no-repeat, var(--h) 10px 10px / 11px 1px no-repeat; }
.box::before { content: ""; position: absolute; left: 6px; top: 6px; width: 9px; height: 9px; border: 1px solid #7b9ebd; border-radius: 1px; background: linear-gradient(#000, #000) center / 5px 1px no-repeat, linear-gradient(#000, #000) center / 1px 5px no-repeat, #f6f4ec; }
.box.minus::before { background: linear-gradient(#000, #000) center / 5px 1px no-repeat, #f6f4ec; }

/* data window */
.data { width: 196px; flex: none; margin-top: 2px; padding-left: 4px; padding-right: 3px; border-left: 1px solid #fff; }
.dw { grid-column: 1 / -1; margin-top: 1px; height: 661px; width: 189px; background: #fff; border: 1px solid #aca899; border-bottom-color: #fff; border-right: 0; }
.dw-head { height: 20px; display: flex; align-items: center; gap: 1px; padding-left: 1px; background: #ebebeb; border-bottom: 1px solid #c0c0c0; }
.dw-row { display: grid; grid-template-columns: 99px 1fr; height: 20px; line-height: 20px; border-bottom: 1px solid #c0c0c0; }
.dw-row span:first-child { padding-left: 18px; border-right: 1px solid #c0c0c0; }
.dw-row span:last-child { text-align: right; padding-right: 5px; }
.dw-row:nth-child(odd) { background: #ebebeb; }

.charts { width: 974px; flex: none; display: flex; flex-direction: column; padding-top: 1px; border-left: 2px solid #6f6c62; }
.chart { background: #000; box-shadow: 0 2px #fff, 2px 2px #fff; }
.chart text { font: 9.300px "DejaVu Sans Condensed", sans-serif; font-stretch: condensed; fill: #fff; }
.chart-tabs { margin-top: 2px; padding-left: 0; }
.chart-tabs .tab { width: 108px; padding: 0 0 0 12px; letter-spacing: -.15px; }
.chart-tabs .tab::after { display: none; }
.chart-tabs .tab.active { width: 103px; padding-left: 8px; }
.tab-arrows { margin: 5px 6px 0 auto; }

/* terminal */
.terminal { height: 243px; flex: none; background: #ece9d8; display: flex; padding-top: 4px; }
.side { width: 15px; padding: 0 2px 2px 1px; display: flex; flex-direction: column; }
.side .x { height: 14px; line-height: 11px; }
.side-title { flex: 1; background: linear-gradient(#9db8ea, #7c95dd); background: linear-gradient(0deg, #9db8ea, #7c95dd); color: #dbe6fb; writing-mode: vertical-rl; transform: rotate(180deg); line-height: 12px; padding-top: 4px; letter-spacing: .1px; }
.term-main { flex: 1; border-left: 1px solid #aca899; border-top: 1px solid #aca899; border-bottom: 1px solid #aca899; display: flex; flex-direction: column; }
.tr { display: grid; grid-template-columns: 135px 189px 94px 73px 94px 105px 105px 105px 105px 105px 105px 1fr; height: 20px; line-height: 20px; flex: none; }
.tr span { text-align: right; padding-right: 3px; border-right: 1px solid #c0c0c0; }
.tr span:first-child { display: flex; align-items: center; gap: 5px; padding-left: 3px; }
.tr span:nth-child(2) { padding-right: 2px; }
.tr svg, .balance > svg { width: 14px; height: 16px; }
.tr span:last-child { border: 0; padding-right: 10px; }
.tr u { text-decoration: none; display: inline-block; width: 19px; padding-left: 4px; color: #999; font: bold 12px/10px "DejaVu Sans", sans-serif; }
.th { font-size: 10.700px; background: #ece9d8; border-bottom: 1px solid #c5c1af; }
.th span { padding-right: 6px; border: 0; background: linear-gradient(#c5c1af, #c5c1af) right 3px / 1px 13px no-repeat; line-height: 21px; height: 19px; }
.th span:first-child { padding-left: 8px; }
.th span:nth-child(2) { padding-right: 4px; }
.th svg { display: inline-block; width: 9px; height: 8px; margin-left: 9px; }
.th span:last-child { padding-right: 11px; background: none; }
.tr.sel { background: #316ac5; color: #fff; }
.tr.alt { background: #ebebeb; }
.balance { height: 20px; flex: none; display: flex; align-items: center; padding: 0 29px 0 3px; gap: 5px; background: #c8c8c8; font-weight: bold; font-size: 10.800px; }
.balance strong { margin-left: auto; font-size: 10.500px; }
.blank { flex: 1; background: #fff; }
.term-main .tabs { flex: none; height: 21px; line-height: 20px; }
.term-main .tab { padding: 0 9.500px; }
.term-main .tab.active { padding: 0 9px; line-height: 20px; font-size: 10.900px; }

.status { height: 24px; flex: none; background: #ece9d8; border-top: 2px solid #fff; display: grid; grid-template-columns: 680px 109px 101px 72px 70px 70px 71px 67px 1fr; line-height: 23px; }
.status span { padding-left: 4px; position: relative; }
.status span:first-child { padding-left: 1px; letter-spacing: .2px; }
.status span:not(:first-child)::before { content: ""; position: absolute; left: 0; top: 3px; width: 1px; height: 17px; background: #aca899; }
.status .conn { display: flex; align-items: center; gap: 21px; padding-left: 4px; }

/* taskbar */
.taskbar { height: 29px; flex: none; display: flex; align-items: center; background: linear-gradient(#3f84f0, #2a62e0 12%, #245edb 60%, #2158d0 90%, #1941a5); color: #fff; border-bottom: 1px solid #fff; }
.start { width: 97px; height: 28px; display: flex; align-items: center; gap: 4px; padding-left: 9px; border-radius: 0 10px 10px 0; background: linear-gradient(#6cb46c, #3c993c 15%, #348f34 60%, #2a7d2a); font: italic bold 18px "Liberation Sans", sans-serif; text-shadow: 1px 1px 1px #234; letter-spacing: -.2px; }
.quick { width: 95px; display: flex; gap: 7px; padding-left: 12px; }
.task { width: 126px; margin-right: 2px; height: 24px; flex: none; display: flex; align-items: center; gap: 5px; padding-left: 9px; border-radius: 3px; background: linear-gradient(#5a9bff, #3c81f3 15%, #3a7cf0 85%, #2a66d8); overflow: hidden; }
.task svg { width: 16px; height: 16px; }
.task.stub { width: 12px; margin-right: 1px; }
.task.cut { width: 114px; margin-right: 2px; padding-left: 10px; letter-spacing: -.25px; gap: 4px; }
.task.current { background: #1c4fb5; width: 127px; padding-left: 10px; }
.lang { margin-left: 8px; width: 10px; flex: none; }
.lang.second { margin-left: 8px; clip-path: inset(0 0 4px -1px); width: 19px; }
.tray { flex: 1; align-self: stretch; display: flex; align-items: center; gap: 4px; background: linear-gradient(#3cb4f6, #1290ea 15%, #1290ea 85%, #0c72c4); padding-left: 2px; border-left: 1px solid #0a3c9c; }
.clock { margin-left: 7px; }
```
FILE: chart.js
```js
const NS = 'http://www.w3.org/2000/svg';
const svg = document.getElementById('chart');

function add(tag, attrs, text) {
  const el = document.createElementNS(NS, tag);
  for (const k in attrs) el.setAttribute(k, attrs[k]);
  if (text) el.textContent = text;
  svg.appendChild(el);
}
const rect = (x, y, width, height, fill) => add('rect', { x, y, width, height, fill, 'shape-rendering': 'crispEdges' });
const line = (d, stroke, dash, offset) => add('path', { d, stroke, fill: 'none', 'shape-rendering': 'crispEdges', 'stroke-dasharray': dash || 'none', 'stroke-dashoffset': offset || 0 });

// High/low extents of hourly bars, in thirds of a pixel below each segment's base line.
const segments = [
  { base: 90, bars: [705,731,708,734,720,743,720,800,755,809,765,849,820,849,810,899,881,971,888,971,821,944,743,893,759,836,755,839,789,893,834,893,888,1113,971,1075,630,1034,603,792,381,645,468,534,369,492,456,501,459,516,435,513,495,534,360,513,354,480,213,396,240,345,321,366,345,399,357,417,399,486,444,528,492,693,618,675,564,657,591,672,570,648,576,816,783,876,792,879,816,873,822,870,801,849,831,858,834,864,834,876,852,888,777,861,750,804,720,762,720,747,726,747,723,765,729,756,627,759,615,696,507,666,399,552,483,558,507,588,429,582,438,579,441,597,375,471,399,459,390,447,408,453,411,453,408,438,420,453,420,453,429,510,471,528,474,501,489,543,495,537,477,528,447,510,414,534,363,450,372,471,375,486,366,450,399,459,246,453,255,393,387,483,342,408,321,366,273,381,99,486,375,441,327,396,321,384,393,414,357,432,405,453,381,429,354,399,354,417,357,384,354,414,390,489,225,579,483,576,447,549,384,480,345,453,294,558,255,402,324,495,357,510,405,486,309,417,330,375,342,393,372,411,369,417,375,432,333,399,291,372,261,336,270,354,267,348,318,384,345,405,345,420,333,774,744,933,804,987,906,1029,909,1005,942,1047,951,1080,933,1050,1020,1158,1137,1203,1158,1230,1125,1194,1143,1188,1128,1182,1227,1308,1227,1284,1179,1248,1161,1245,1146,1194,1119,1179,1116,1149,1107,1137,1101,1137,1074,1155,1071,1239,1032,1209,1068,1143] },
  { base: 220, bars: [642,690,639,699,600,708,564,666,513,615,489,588,537,594,516,585,513,552,495,546,501,525,498,525,516,567,537,591,531,588,543,606,570,612,591,627,576,618,558,600,537,636,492,621,519,591,510,558,504,561,534,621,567,705,381,657,279,444,276,363,357,417,309,417,294,387,315,369,327,348,339,357,306,357,300,342,288,357,345,384,336,381,336,372,339,375,297,360,318,387,237,375,318,447,396,495,414,498,276,456,171,366,189,309,54,231,63,210,141,207,126,198,132,189,138,183,162,189,171,204,177,204,159,222,201,237,186,234,156,204,153,186,162,198,147,195,93,183,147,330,270,390,336,387,282,363,264,309,243,342,225,306,219,315,279,357,321,363,339,393,354,372,357,390,375,387,375,435,393,423,411,474,393,471,387,450,420,486,465,492,459,486,438,486,393,534,510,570,456,549,402,525,315,477,261,348,264,330,270,405,342,429,378,549,516,585,492,546,486,513,474,516,453,519,384,507,474,555,513,579,480,552,471,519,453,492,438,456,426,474,447,480,453,621,339,618,366,519,321,405,321,423,363,441,279,390,177,336,183,354,264,369,198,285,201,315,306,360,324,360,342,378,339,378,333,375,330,372,333,405,372,405,369,402,360,393,381,408,375,405,396,465,426,549,462,546,507,564,471,534,501,582,546,666,570,720,645,738,687,801,717,795,765,822,792,831,786,825] },
  { base: 340, bars: [426,465,429,459,405,447,405,441,399,441,402,432,411,438,402,447,423,498,471,519,456,546,477,744,630,735,642,741,663,750,669,750,630,735,717,813,714,846,744,840,771,849,816,849,795,843,774,819,798,816,795,822,786,822,756,795,765,795,771,810,786,828,819,849,813,837,810,849,795,879,738,834,726,798,750,789,741,834,753,837,276,957,297,657,168,492,69,210,177,549,432,540,495,555,429,516,417,471,438,471,399,468,387,447,408,480,444,486,435,459,444,495,444,474,447,516,432,528,438,534,462,552,498,603,540,624,516,627,459,960,732,1002,816,975,807,927,834,900,864,945,888,951,876,918,903,942,900,954,840,933,861,918,837,900,873,918,894,927,900,930,873,936,882,945,927,1053,957,1095,1005,1080,1053,1119,975,1122,1011,1104,981,1113,942,1005,873,975,852,912,753,906,705,789,633,777,717,804,765,825,762,813,759,792,777,843,795,843,786,837,795,897,765,894,750,813,645,774,609,753,516,624,534,654,525,648,555,618,468,615,393,543,330,417,111,408,177,345,273,447,369,438,399,495,471,531,477,516,444,513,378,480,408,453,435,546,483,543,435,495,366,456,363,405,378,432,378,447,387,537,357,456,378,498,423,492,423,528,360,477,285,429,174,309,213,303,183,255,123,231,123,195,111,234,111,150,111,138,117,135] }
];

const prices = ['1.26135','1.25940','1.25740','1.25545','1.25345','1.25150','1.24950','1.24755','1.24555','1.24360','1.24160','1.23965','1.23765','1.23570','1.23370','1.23175','1.22975','1.22780','1.22580','1.22385'];
const dates = ['13 Nov 2014','17 Nov 07:00','18 Nov 15:00','19 Nov 23:00','21 Nov 07:00','24 Nov 15:00','25 Nov 23:00','27 Nov 07:00','28 Nov 15:00','1 Dec 23:00','3 Dec 07:00','4 Dec 15:00','5 Dec 23:00','9 Dec 07:00','10 Dec 15:00'];

// grid
for (let x = 468; x < 1358; x += 32) line(`M${x + .5} 94V729`, '#778899', '3 3');
prices.forEach((_, i) => line(`M437 ${99.5 + 33 * i}H1358`, '#778899', '3 3'));
for (let x = 438; x < 1358; x += 48) line(`M${x + .5} 93V729`, '#ffffff', '4 2');

// label backgrounds
rect(437, 94, 241, 13, '#000');
const labels = [[454, '#36956483 sl', 57], [495, '#36956483 buy 0.01', 88], [579, '#36877581 sl', 57], [682, '#36877581 buy 0.01', 88]];
labels.forEach(([y, , w]) => rect(441, y - 9, w + 2, 10, '#000'));

// order levels
line('M436 456.5H1357', '#ff0000', '9 6 3 6');
line('M436 497.5H1357', '#32cd32', '9 6 3 6');
line('M436 581.5H1357', '#ff0000', '9 6 3 6');
line('M436 684.5H1357', '#32cd32', '9 6 3 6');
line('M436 380.5H1358', '#778899');

// price bars, two pixels apart
let x = 436;
for (const { base, bars } of segments) {
  for (let i = 0; i < bars.length; i += 2, x += 2) {
    const top = Math.round(base + bars[i] / 3);
    const bottom = Math.round(base + bars[i + 1] / 3);
    rect(x, top, 1, bottom - top, '#00ff00');
  }
}
line('M436 376.5H1358', '#ff0000');

// frame and axes
line('M435.5 92V730M435 92.5H1359M1358.5 92V730M435 729.5H1359', '#ffffff');
prices.forEach((p, i) => {
  line(`M1359 ${99.5 + 33 * i}h2`, '#ffffff');
  add('text', { x: 1364, y: 102 + 33 * i, textLength: 33.5 }, p);
});
dates.forEach((d, i) => {
  line(`M${436.5 + 64 * i} 730v3`, '#ffffff');
  add('text', { x: 435 + 64 * i, y: 742, textLength: d.length === 12 ? 57 : d.includes(':') ? 51 : 55 }, d);
});

// current ask and bid
rect(1360, 370, 41, 10, '#ff0000');
rect(1360, 374, 41, 11, '#fff');
add('text', { x: 1364, y: 383, textLength: 33.5, style: 'fill:#000' }, '1.24456');

labels.forEach(([y, t, w]) => add('text', { x: 442, y, textLength: w - 1 }, t));
add('path', { d: 'M439 99h8l-4 4z', fill: '#fff' });
add('text', { x: 451, y: 104, textLength: 76 }, 'EURUSDmicro,H1');
add('text', { x: 533, y: 104, textLength: 141 }, '1.24450 1.24465 1.24431 1.24456');
```
